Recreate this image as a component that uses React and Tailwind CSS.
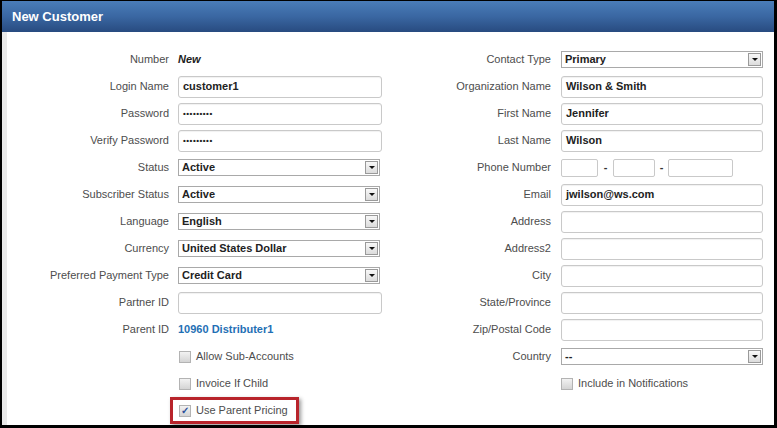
import React from "react";

const font = { fontFamily: '"Liberation Sans", Arial, sans-serif' };

function Label({ children, w }) {
  return (
    <div className={`${w} shrink-0 text-right text-[11px] text-[#4d4d4d] whitespace-nowrap`}>{children}</div>
  );
}

function TextInput({ value, w = "w-[204px]", small }) {
  return (
    <div
      className={`${w} h-[22px] rounded-[3px] border border-[#c9c9c9] bg-white shadow-[inset_0_1px_1px_rgba(0,0,0,0.06)] flex items-center px-[4px] text-[#222] font-bold whitespace-nowrap ${small ? "text-[8px] tracking-[0.5px]" : "text-[11px]"}`}
    >
      {value}
    </div>
  );
}

function Select({ value, w = "w-[202px]" }) {
  return (
    <div className={`${w} h-[17px] border border-[#a9a9a9] bg-white flex items-center justify-between pl-[3px] text-[11px] font-bold text-[#222]`}>
      <span className="leading-none">{value}</span>
      <div className="w-[13px] h-[13px] mr-[1px] border border-[#9a9a9a] bg-gradient-to-b from-[#f8f8f8] to-[#dcdcdc] flex items-center justify-center">
        <div className="w-0 h-0 border-l-[3px] border-r-[3px] border-t-[3px] border-l-transparent border-r-transparent border-t-[#111]" />
      </div>
    </div>
  );
}

function Checkbox({ checked }) {
  return (
    <div className="w-[12px] h-[12px] shrink-0 border border-[#b3b3b3] bg-gradient-to-b from-[#f2f2f2] to-[#d4d4d4] flex items-center justify-center text-[10px] leading-none text-[#2a4f9a] font-bold">
      {checked ? "✓" : ""}
    </div>
  );
}

function Row({ children }) {
  return <div className="h-[27px] flex items-center">{children}</div>;
}

export default function App() {
  const RW = "w-[161px]";
  return (
    <div style={font} className="w-[777px] h-[428px] bg-white overflow-hidden">
      <div className="w-[777px] h-[428px] border-t border-l-2 border-r-[3px] border-b-[3px] border-black flex flex-col">
        <div className="h-[31px] shrink-0 bg-gradient-to-b from-[#4a7db9] via-[#3a67a2] to-[#284b80] flex items-center pl-[10px]">
          <span className="text-white font-bold text-[13px]">New Customer</span>
        </div>
        <div className="flex-1 flex border-l-[5px] border-[#e9e9e9] pt-[14px]">
          {/* Left column */}
          <div className="w-[383px] shrink-0 flex flex-col">
            <Row>
              <Label w="w-[162px]">Number</Label>
              <span className="ml-[9px] text-[11px] font-bold italic text-[#222]">New</span>
            </Row>
            <Row>
              <Label w="w-[162px]">Login Name</Label>
              <div className="ml-[9px]"><TextInput value="customer1" /></div>
            </Row>
            <Row>
              <Label w="w-[162px]">Password</Label>
              <div className="ml-[9px]"><TextInput value="•••••••••" small /></div>
            </Row>
            <Row>
              <Label w="w-[162px]">Verify Password</Label>
              <div className="ml-[9px]"><TextInput value="•••••••••" small /></div>
            </Row>
            <Row>
              <Label w="w-[162px]">Status</Label>
              <div className="ml-[9px]"><Select value="Active" /></div>
            </Row>
            <Row>
              <Label w="w-[162px]">Subscriber Status</Label>
              <div className="ml-[9px]"><Select value="Active" /></div>
            </Row>
            <Row>
              <Label w="w-[162px]">Language</Label>
              <div className="ml-[9px]"><Select value="English" /></div>
            </Row>
            <Row>
              <Label w="w-[162px]">Currency</Label>
              <div className="ml-[9px]"><Select value="United States Dollar" /></div>
            </Row>
            <Row>
              <Label w="w-[162px]">Preferred Payment Type</Label>
              <div className="ml-[9px]"><Select value="Credit Card" /></div>
            </Row>
            <Row>
              <Label w="w-[162px]">Partner ID</Label>
              <div className="ml-[9px]"><TextInput value="" /></div>
            </Row>
            <Row>
              <Label w="w-[162px]">Parent ID</Label>
              <span className="ml-[9px] text-[11px] font-bold text-[#1f70b5]">10960 Distributer1</span>
            </Row>
            <Row>
              <div className="w-[162px] shrink-0" />
              <div className="ml-[10px] flex items-center gap-[5px] text-[11px] text-[#4d4d4d]">
                <Checkbox /> <span>Allow Sub-Accounts</span>
              </div>
            </Row>
            <Row>
              <div className="w-[162px] shrink-0" />
              <div className="ml-[10px] flex items-center gap-[5px] text-[11px] text-[#4d4d4d]">
                <Checkbox /> <span>Invoice If Child</span>
              </div>
            </Row>
            <Row>
              <div className="w-[162px] shrink-0" />
              <div className="ml-[1px] h-[27px] w-[129px] border-[3px] border-[#b8242b] shadow-[2px_2px_4px_rgba(0,0,0,0.4)] flex items-center pl-[6px] gap-[5px] text-[11px] text-[#4d4d4d] whitespace-nowrap">
                <Checkbox checked /> <span>Use Parent Pricing</span>
              </div>
            </Row>
          </div>
          {/* Right column */}
          <div className="flex-1 flex flex-col">
            <Row>
              <Label w={RW}>Contact Type</Label>
              <div className="ml-[10px]"><Select value="Primary" /></div>
            </Row>
            <Row>
              <Label w={RW}>Organization Name</Label>
              <div className="ml-[10px]"><TextInput value="Wilson & Smith" w="w-[202px]" /></div>
            </Row>
            <Row>
              <Label w={RW}>First Name</Label>
              <div className="ml-[10px]"><TextInput value="Jennifer" w="w-[202px]" /></div>
            </Row>
            <Row>
              <Label w={RW}>Last Name</Label>
              <div className="ml-[10px]"><TextInput value="Wilson" w="w-[202px]" /></div>
            </Row>
            <Row>
              <Label w={RW}>Phone Number</Label>
              <div className="ml-[10px] flex items-center text-[11px] font-bold text-[#333]">
                <div className="w-[37px] h-[18px] rounded-[2px] border border-[#c9c9c9]" />
                <span className="w-[15px] text-center">-</span>
                <div className="w-[42px] h-[18px] rounded-[2px] border border-[#c9c9c9]" />
                <span className="w-[13px] text-center">-</span>
                <div className="w-[65px] h-[18px] rounded-[2px] border border-[#c9c9c9]" />
              </div>
            </Row>
            <Row>
              <Label w={RW}>Email</Label>
              <div className="ml-[10px]"><TextInput value="jwilson@ws.com" w="w-[202px]" /></div>
            </Row>
            <Row>
              <Label w={RW}>Address</Label>
              <div className="ml-[10px]"><TextInput value="" w="w-[202px]" /></div>
            </Row>
            <Row>
              <Label w={RW}>Address2</Label>
              <div className="ml-[10px]"><TextInput value="" w="w-[202px]" /></div>
            </Row>
            <Row>
              <Label w={RW}>City</Label>
              <div className="ml-[10px]"><TextInput value="" w="w-[202px]" /></div>
            </Row>
            <Row>
              <Label w={RW}>State/Province</Label>
              <div className="ml-[10px]"><TextInput value="" w="w-[202px]" /></div>
            </Row>
            <Row>
              <Label w={RW}>Zip/Postal Code</Label>
              <div className="ml-[10px]"><TextInput value="" w="w-[202px]" /></div>
            </Row>
            <Row>
              <Label w={RW}>Country</Label>
              <div className="ml-[10px]"><Select value="--" /></div>
            </Row>
            <Row>
              <div className={`${RW} shrink-0`} />
              <div className="ml-[10px] flex items-center gap-[5px] text-[11px] text-[#4d4d4d]">
                <Checkbox /> <span>Include in Notifications</span>
              </div>
            </Row>
          </div>
        </div>
      </div>
    </div>
  );
}
